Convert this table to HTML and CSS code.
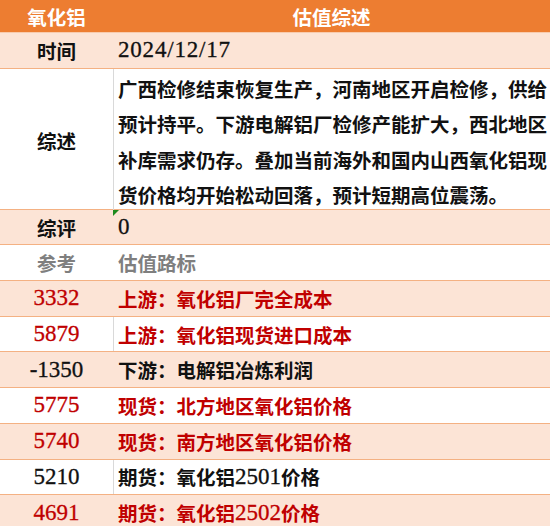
FILE: index.html
```html
<!DOCTYPE html>
<html lang="zh-CN">
<head>
<meta charset="utf-8">
<title>氧化铝 估值综述</title>
<link rel="stylesheet" href="styles.css">
</head>
<body>
<div class="sheet">
  <div class="row head">
    <div class="c1">氧化铝</div>
    <div class="c2 center">估值综述</div>
  </div>
  <div class="row peach">
    <div class="c1">时间</div>
    <div class="c2"><span class="num date">2024/12/17</span></div>
  </div>
  <div class="row desc divided">
    <div class="c1">综述</div>
    <div class="c2 lines">广西检修结束恢复生产，河南地区开启检修，供给<br>预计持平。下游电解铝厂检修产能扩大，西北地区<br>补库需求仍存。叠加当前海外和国内山西氧化铝现<br>货价格均开始松动回落，预计短期高位震荡。</div>
  </div>
  <div class="row peach">
    <div class="c1">综评</div>
    <div class="c2 flagged"><span class="flag"></span><span class="num">0</span></div>
  </div>
  <div class="row gray">
    <div class="c1">参考</div>
    <div class="c2">估值路标</div>
  </div>
  <div class="row peach red">
    <div class="c1"><span class="num">3332</span></div>
    <div class="c2">上游：氧化铝厂完全成本</div>
  </div>
  <div class="row red divided">
    <div class="c1"><span class="num">5879</span></div>
    <div class="c2">上游：氧化铝现货进口成本</div>
  </div>
  <div class="row peach">
    <div class="c1"><span class="num">-1350</span></div>
    <div class="c2">下游：电解铝冶炼利润</div>
  </div>
  <div class="row red">
    <div class="c1"><span class="num">5775</span></div>
    <div class="c2">现货：北方地区氧化铝价格</div>
  </div>
  <div class="row peach red">
    <div class="c1"><span class="num">5740</span></div>
    <div class="c2">现货：南方地区氧化铝价格</div>
  </div>
  <div class="row divided">
    <div class="c1"><span class="num">5210</span></div>
    <div class="c2">期货：氧化铝<span class="num">2501</span>价格</div>
  </div>
  <div class="row peach red">
    <div class="c1"><span class="num">4691</span></div>
    <div class="c2">期货：氧化铝<span class="num">2502</span>价格</div>
  </div>
</div>
</body>
</html>
```
FILE: styles.css
```css
html, body {
  margin: 0;
  padding: 0;
  background: #ffffff;
}
.sheet {
  width: 550px;
  height: 526px;
  overflow: hidden;
  font-family: "Noto Sans CJK SC", sans-serif;
  font-weight: bold;
  font-size: 19.5px;
  color: #111111;
}
.row {
  display: grid;
  grid-template-columns: 113px 1fr;
  height: 35.7px;
  box-sizing: border-box;
  border-bottom: 1px solid #f4b183;
  background: #ffffff;
}
.row > div {
  display: flex;
  align-items: center;
  white-space: nowrap;
}
.c1 {
  justify-content: center;
}
.c2 {
  padding-left: 5px;
}
.c2.center {
  justify-content: center;
  padding-left: 0;
}
.head {
  height: 33px;
  background: #ed7d31;
  color: #ffffff;
  border-bottom: 1px solid #f8cbad;
}
.peach {
  background: #fce4d6;
}
.desc {
  height: 141px;
}
.lines {
  line-height: 35.4px;
  padding-top: 2px;
}
.divided .c2 {
  border-left: 1px solid #d9d9d9;
  padding-left: 4px;
}
.gray {
  color: #7f7f7f;
}
.red {
  color: #c00000;
}
.num {
  font-family: "Liberation Serif", "Times New Roman", serif;
  font-weight: normal;
  font-size: 23px;
  -webkit-text-stroke: 0.3px currentColor;
}
.date {
  letter-spacing: 0.8px;
}
.flagged {
  position: relative;
}
.flag {
  position: absolute;
  left: 0;
  top: 0;
  width: 0;
  height: 0;
  border-top: 6px solid #1d8a1d;
  border-right: 6px solid transparent;
}
```
